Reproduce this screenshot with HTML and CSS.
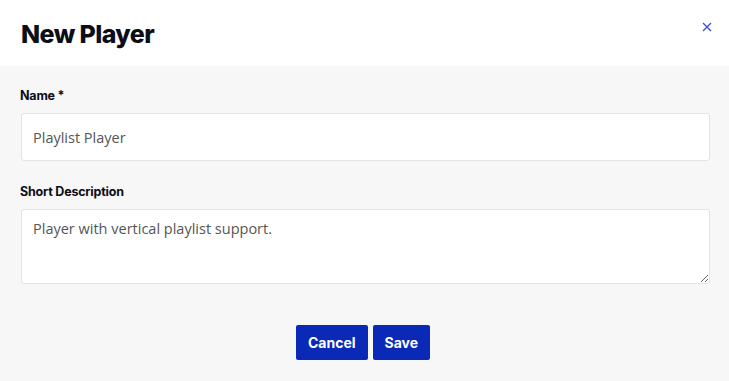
FILE: index.html
```html
<!DOCTYPE html>
<html lang="en">
<head>
    <meta charset="UTF-8">
    <title>New Player</title>
    <link rel="stylesheet" href="styles.css">
</head>
<body>
    <div class="modal">
        <div class="header">
            <h1 class="title">New Player</h1>
            <a class="close" href="javascript:;">
                <svg width="10" height="10" viewBox="0 0 10 10"><path d="M1 1L9 9M9 1L1 9" stroke="#3d52d5" stroke-width="1.4" fill="none"/></svg>
            </a>
        </div>
        <div class="body">
            <label class="label">Name *</label>
            <input class="field" type="text" value="Playlist Player">
            <label class="label">Short Description</label>
            <textarea class="field area">Player with vertical playlist support.</textarea>
            <div class="actions">
                <button class="btn">Cancel</button>
                <button class="btn">Save</button>
            </div>
        </div>
    </div>
</body>
</html>
```
FILE: styles.css
```css
*{
    margin: 0;
    padding: 0;
    box-sizing: border-box;
}
body{
    font-family: Inter, "Liberation Sans", sans-serif;
    background: #fff;
}
.modal{
    width: 729px;
    height: 381px;
    display: flex;
    flex-direction: column;
}
.header{
    height: 66px;
    display: flex;
    justify-content: space-between;
    align-items: flex-start;
    padding: 0 17px 0 21px;
    background: #fff;
}
.title{
    font-size: 25px;
    font-weight: 800;
    color: #0b0d17;
    letter-spacing: -0.6px;
    margin-top: 19px;
}
.close{
    display: block;
    margin-top: 16px;
}
.body{
    flex: 1;
    background: #f7f7f7;
    padding: 22px 19px 0 21px;
    display: flex;
    flex-direction: column;
}
.label{
    font-size: 12.5px;
    font-weight: 700;
    color: #0b0d17;
    letter-spacing: -0.2px;
    margin-left: -1px;
    margin-bottom: 10px;
}
.field{
    display: block;
    width: 100%;
    height: 48px;
    background: #fff;
    border: 1px solid #e3e3e3;
    border-radius: 3px;
    padding: 0 11px;
    font-family: "Open Sans", "Liberation Sans", sans-serif;
    font-size: 14.5px;
    color: #555;
    margin-bottom: 23px;
    outline: none;
}
.area{
    height: 75px;
    padding: 9px 11px;
    resize: vertical;
    margin-bottom: 41px;
}
.actions{
    display: flex;
    justify-content: center;
    gap: 5px;
    margin-left: -5px;
}
.btn{
    height: 35px;
    padding: 0 12px;
    background: #0a29b7;
    color: #fff;
    border: none;
    border-radius: 2px;
    font-family: Inter, "Liberation Sans", sans-serif;
    font-size: 14px;
    font-weight: 700;
}
```
